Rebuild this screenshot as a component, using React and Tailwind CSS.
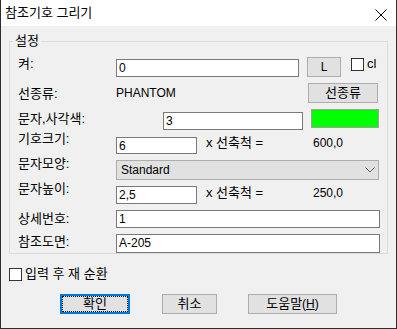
function Field({ value, className = "" }) {
  return (
    <div
      className={`shrink-0 bg-white border border-[#7a7a7a] pl-[2px] leading-[16px] ${className}`}
    >
      {value}
    </div>
  );
}

function Btn({ children, className = "" }) {
  return (
    <div
      className={`shrink-0 h-[20px] bg-[#e1e1e1] border border-[#adadad] flex items-center justify-center leading-[14px] ${className}`}
    >
      {children}
    </div>
  );
}

function Label({ children, className = "" }) {
  return <div className={`shrink-0 leading-[14px] ${className}`}>{children}</div>;
}

// hangul runs a touch larger so widths line up with the dialog font
function K({ children }) {
  return <span className="text-[13px]">{children}</span>;
}

export default function App() {
  return (
    <div className="w-[397px] h-[329px] flex flex-col border-l border-r border-b border-[#2d2d2d] text-[12px] text-black font-['Liberation_Sans','Noto_Sans_CJK_KR',sans-serif]">
      {/* title bar */}
      <div className="h-[26px] bg-white flex justify-between items-start shrink-0">
        <div className="pt-[6px] pl-[4px] leading-[14px]">
          <K>참조기호 그리기</K>
        </div>
        <svg width="12" height="12" viewBox="0 0 12 12" className="mt-[9px] mr-[9px]">
          <path d="M0.5 0.5 L11.5 11.5 M11.5 0.5 L0.5 11.5" stroke="#000" strokeWidth="1" />
        </svg>
      </div>

      <div className="flex-1 bg-[#f0f0f0] flex flex-col">
        <fieldset className="mt-[8px] ml-[8px] w-[379px] border border-[#dcdcdc] pt-[8px]">
          <legend className="ml-[3px] px-[2px] leading-[14px]">
            <K>설정</K>
          </legend>

          {/* 켜 */}
          <div className="h-[26px] flex items-start pl-[8px]">
            <Label className="w-[98px] mt-[1px]">
              <K>켜:</K>
            </Label>
            <Field value="0" className="w-[183px] h-[18px] mt-[3px]" />
            <Btn className="ml-[8px] w-[34px] mt-[1px]">L</Btn>
            <div className="ml-[10px] mt-[2px] w-[13px] h-[13px] bg-white border border-[#333]" />
            <Label className="ml-[3px] mt-[1px] text-[13px]">cl</Label>
          </div>

          {/* 선종류 */}
          <div className="h-[26px] flex items-start pl-[8px]">
            <Label className="w-[98px] mt-[5px]">
              <K>선종류:</K>
            </Label>
            <Label className="w-[192px] mt-[4px]">PHANTOM</Label>
            <Btn className="w-[70px] mt-[1px]">
              <K>선종류</K>
            </Btn>
          </div>

          {/* 문자,사각색 */}
          <div className="h-[23px] flex items-start pl-[8px]">
            <Label className="w-[145px] mt-[4px]">
              <K>문자,사각색:</K>
            </Label>
            <Field value="3" className="w-[140px] h-[18px] mt-[4px]" />
            <div className="ml-[8px] mt-[1px] w-[68px] h-[19px] bg-[#00ff00] border border-[#a0a0a0]" />
          </div>

          {/* 기호크기 */}
          <div className="h-[25px] flex items-start pl-[8px]">
            <Label className="w-[98px] mt-[1px]">
              <K>기호크기:</K>
            </Label>
            <Field value="6" className="w-[81px] h-[17px] mt-[6px]" />
            <Label className="ml-[9px] w-[107px] mt-[5px]">
              <K>x 선축척 =</K>
            </Label>
            <Label className="mt-[5px]">600,0</Label>
          </div>

          {/* 문자모양 */}
          <div className="h-[25px] flex items-start pl-[8px]">
            <Label className="w-[98px] mt-[1px]">
              <K>문자모양:</K>
            </Label>
            <div className="mt-[4px] w-[263px] h-[20px] bg-[#e1e1e1] border border-[#adadad] flex items-center justify-between pl-[4px] pr-[3px] leading-[14px]">
              <span>Standard</span>
              <svg width="10" height="6" viewBox="0 0 10 6">
                <path d="M0.5 0.5 L5 5 L9.5 0.5" fill="none" stroke="#606060" strokeWidth="1" />
              </svg>
            </div>
          </div>

          {/* 문자높이 */}
          <div className="h-[27px] flex items-start pl-[8px]">
            <Label className="w-[98px] mt-[1px]">
              <K>문자높이:</K>
            </Label>
            <Field value="2,5" className="w-[81px] h-[18px] mt-[5px]" />
            <Label className="ml-[9px] w-[107px] mt-[5px]">
              <K>x 선축척 =</K>
            </Label>
            <Label className="mt-[5px]">250,0</Label>
          </div>

          {/* 상세번호 */}
          <div className="h-[24px] flex items-start pl-[8px]">
            <Label className="w-[98px] mt-[4px]">
              <K>상세번호:</K>
            </Label>
            <Field value="1" className="w-[264px] h-[18px] mt-[2px]" />
          </div>

          {/* 참조도면 */}
          <div className="h-[21px] flex items-start pl-[8px]">
            <Label className="w-[98px] mt-[3px]">
              <K>참조도면:</K>
            </Label>
            <Field value="A-205" className="w-[264px] h-[19px] mt-[2px]" />
          </div>
        </fieldset>

        <div className="mt-[13px] ml-[8px] flex items-center">
          <div className="w-[13px] h-[13px] bg-white border border-[#333]" />
          <span className="ml-[3px] leading-[14px]">
            <K>입력 후 재 순환</K>
          </span>
        </div>

        <div className="mt-[13px] ml-[59px] flex items-start">
          <div className="w-[70px] h-[20px] bg-[#e1e1e1] border-2 border-[#0078d7] shrink-0 flex">
            <div className="flex-1 border border-dotted border-black flex items-center justify-center leading-[12px]">
              <K>확인</K>
            </div>
          </div>
          <Btn className="ml-[32px] w-[55px]">
            <K>취소</K>
          </Btn>
          <Btn className="ml-[31px] w-[89px]">
            <K>도움말</K>(<span className="underline">H</span>)
          </Btn>
        </div>
      </div>
    </div>
  );
}
